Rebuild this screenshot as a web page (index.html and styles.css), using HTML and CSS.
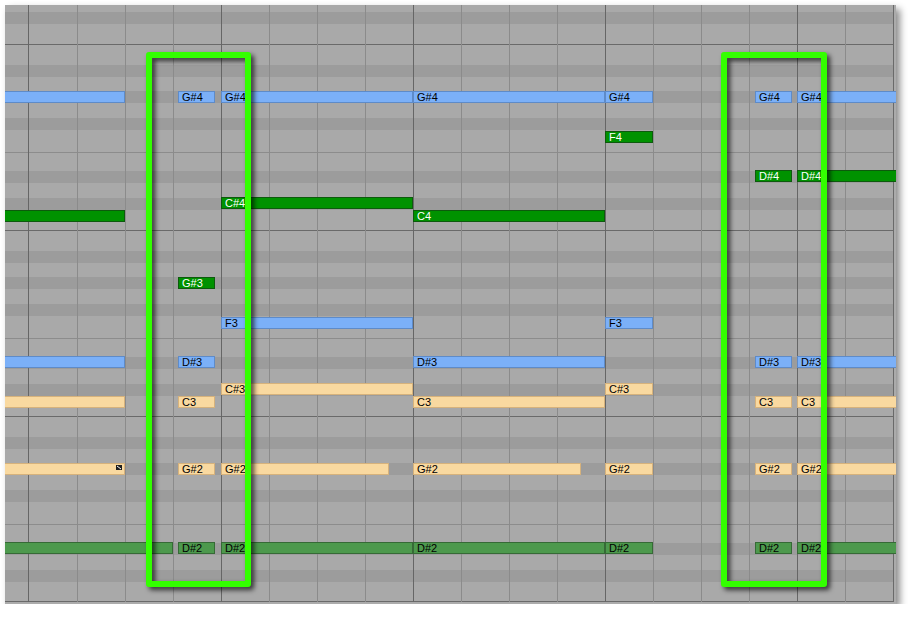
FILE: index.html
```html
<!DOCTYPE html>
<html>
<head>
<meta charset="utf-8">
<link rel="stylesheet" href="styles.css">
</head>
<body>
<div class="roll">
    <!-- bar and beat lines -->
    <div class="bars">
        <div class="lead"></div>
        <div class="bar first"><div class="beat"></div><div class="beat"></div><div class="beat"></div><div class="beat"></div></div>
        <div class="bar"><div class="beat"></div><div class="beat"></div><div class="beat"></div><div class="beat"></div></div>
        <div class="bar"><div class="beat"></div><div class="beat"></div><div class="beat"></div><div class="beat"></div></div>
        <div class="bar"><div class="beat"></div><div class="beat"></div><div class="beat"></div><div class="beat"></div></div>
        <div class="bar"><div class="beat"></div><div class="beat"></div></div>
    </div>

    <!-- G#4 -->
    <div class="note blue" style="left:-10px;top:86px;width:130px"></div>
    <div class="note blue" style="left:173px;top:86px;width:37px">G#4</div>
    <div class="note blue" style="left:216px;top:86px;width:192px">G#4</div>
    <div class="note blue" style="left:408px;top:86px;width:192px">G#4</div>
    <div class="note blue" style="left:600px;top:86px;width:48px">G#4</div>
    <div class="note blue" style="left:750px;top:86px;width:37px">G#4</div>
    <div class="note blue" style="left:792px;top:86px;width:120px">G#4</div>

    <!-- F4 / D#4 / C#4 / C4 -->
    <div class="note green" style="left:600px;top:126px;width:48px">F4</div>
    <div class="note green" style="left:750px;top:165px;width:37px">D#4</div>
    <div class="note green" style="left:792px;top:165px;width:120px">D#4</div>
    <div class="note green" style="left:216px;top:192px;width:192px">C#4</div>
    <div class="note green" style="left:-10px;top:205px;width:130px"></div>
    <div class="note green" style="left:408px;top:205px;width:192px">C4</div>

    <!-- G#3 / F3 -->
    <div class="note green" style="left:173px;top:272px;width:37px">G#3</div>
    <div class="note blue" style="left:216px;top:312px;width:192px">F3</div>
    <div class="note blue" style="left:600px;top:312px;width:48px">F3</div>

    <!-- D#3 -->
    <div class="note blue" style="left:-10px;top:351px;width:130px"></div>
    <div class="note blue" style="left:173px;top:351px;width:37px">D#3</div>
    <div class="note blue" style="left:408px;top:351px;width:192px">D#3</div>
    <div class="note blue" style="left:750px;top:351px;width:37px">D#3</div>
    <div class="note blue" style="left:792px;top:351px;width:120px">D#3</div>

    <!-- C#3 / C3 -->
    <div class="note peach" style="left:216px;top:378px;width:192px">C#3</div>
    <div class="note peach" style="left:600px;top:378px;width:48px">C#3</div>
    <div class="note peach" style="left:-10px;top:391px;width:130px"></div>
    <div class="note peach" style="left:173px;top:391px;width:37px">C3</div>
    <div class="note peach" style="left:408px;top:391px;width:192px">C3</div>
    <div class="note peach" style="left:750px;top:391px;width:37px">C3</div>
    <div class="note peach" style="left:792px;top:391px;width:120px">C3</div>

    <!-- G#2 -->
    <div class="note peach" style="left:-10px;top:458px;width:130px">
        <svg class="grip" width="6" height="5" viewBox="0 0 6 5"><rect width="6" height="5" fill="#1e1e1e"/><path d="M1 1L5 4" stroke="#fff" stroke-width="1"/></svg>
    </div>
    <div class="note peach" style="left:173px;top:458px;width:37px">G#2</div>
    <div class="note peach" style="left:216px;top:458px;width:168px">G#2</div>
    <div class="note peach" style="left:408px;top:458px;width:168px">G#2</div>
    <div class="note peach" style="left:600px;top:458px;width:48px">G#2</div>
    <div class="note peach" style="left:750px;top:458px;width:37px">G#2</div>
    <div class="note peach" style="left:792px;top:458px;width:120px">G#2</div>

    <!-- D#2 -->
    <div class="note dark" style="left:-10px;top:537px;width:178px"></div>
    <div class="note dark" style="left:173px;top:537px;width:37px">D#2</div>
    <div class="note dark" style="left:216px;top:537px;width:192px">D#2</div>
    <div class="note dark" style="left:408px;top:537px;width:192px">D#2</div>
    <div class="note dark" style="left:600px;top:537px;width:48px">D#2</div>
    <div class="note dark" style="left:750px;top:537px;width:37px">D#2</div>
    <div class="note dark" style="left:792px;top:537px;width:120px">D#2</div>

    <!-- selection frames -->
    <div class="frame" style="left:141px"></div>
    <div class="frame" style="left:716px;width:106px"></div>
</div>
</body>
</html>
```

FILE: styles.css
```css
body {
    margin: 0;
    background: #fff;
    font-family: "Liberation Sans Narrow", "Liberation Sans", sans-serif;
}

/* piano roll panel, one key pattern tile per octave */
.roll {
    position: relative;
    overflow: hidden;
    width: 891px;
    height: 599px;
    margin: 5px 0 0 5px;
    background-color: #a9a9a9;
    background-image: linear-gradient(to bottom,
        #6a6a6a 0, #6a6a6a 1px,
        #a9a9a9 1px, #a9a9a9 21px,
        #9c9c9c 21px, #9c9c9c 33px,
        #a9a9a9 33px, #a9a9a9 47px,
        #9c9c9c 47px, #9c9c9c 59px,
        #a9a9a9 59px, #a9a9a9 74px,
        #9c9c9c 74px, #9c9c9c 86px,
        #a9a9a9 86px, #a9a9a9 108px,
        #8c8c8c 108px, #8c8c8c 109px,
        #a9a9a9 109px, #a9a9a9 127px,
        #9c9c9c 127px, #9c9c9c 139px,
        #a9a9a9 139px, #a9a9a9 154px,
        #9c9c9c 154px, #9c9c9c 166px,
        #a9a9a9 166px, #a9a9a9 186px);
    background-size: 100% 186px;
    background-position: 0 39px;
    box-shadow: inset -2px -2px 0 #ababab, inset -3px -3px 0 #6a6a6a, 4px 4px 7px rgba(0, 0, 0, 0.45);
}

.bars {
    display: flex;
    height: 597px;
    width: 888px;
}

.lead {
    width: 23px;
}

.bar {
    display: flex;
}

.beat {
    box-sizing: border-box;
    width: 48px;
    border-left: 1px solid #8b8b8b;
}

.beat:first-child {
    border-left-color: #666;
}

.bar.first .beat:first-child {
    width: 49px;
}

/* notes */
.note {
    position: absolute;
    box-sizing: border-box;
    height: 12px;
    border: 1px solid;
    padding-left: 3px;
    font-size: 11px;
    line-height: 10px;
    white-space: nowrap;
    overflow: hidden;
    color: #000;
}

.note.blue {
    background: #7bb0f8;
    border-color: #5e8bc8;
}

.note.green {
    background: #009200;
    border-color: #0d5a0d;
    color: #fff;
}

.note.peach {
    background: #f9d9a0;
    border-color: #d6b27c;
}

.note.dark {
    background: #4d994d;
    border-color: #366a36;
}

.grip {
    position: absolute;
    right: 2px;
    top: 1px;
}

/* highlight frames */
.frame {
    position: absolute;
    top: 47px;
    width: 105px;
    height: 535px;
    box-sizing: border-box;
    border: 6px solid #33ff00;
    border-radius: 3px;
    filter: drop-shadow(3px 3px 2.5px rgba(0, 0, 0, 0.7));
}
```
